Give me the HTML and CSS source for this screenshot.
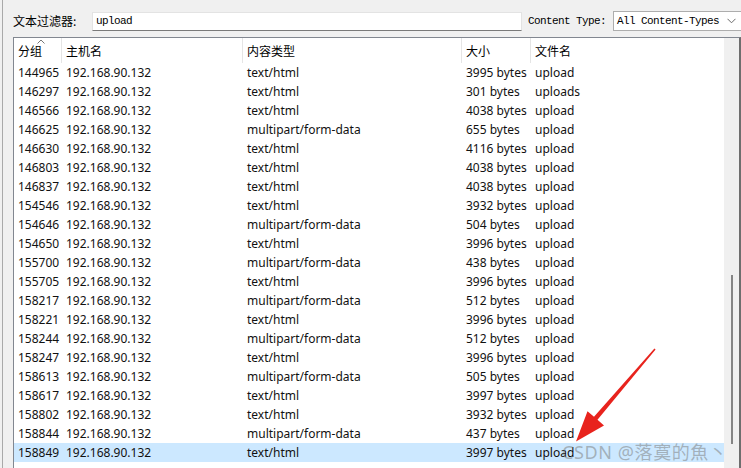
FILE: index.html
```html
<!DOCTYPE html>
<html lang="zh">
<head>
<meta charset="utf-8">
<title>Filter</title>
<link rel="stylesheet" href="styles.css">
</head>
<body>
<div class="screen">
  <div class="toolbar">
    <span class="label">文本过滤器:</span>
    <div class="input">upload</div>
    <span class="ct-label">Content Type:</span>
    <div class="select"><span>All Content-Types</span>
      <svg class="chev" width="9" height="6" viewBox="0 0 9 6"><path d="M0.5 0.8 L4.5 4.8 L8.5 0.8" fill="none" stroke="#6a6a6a" stroke-width="1"/></svg>
    </div>
  </div>
  <div class="panel">
    <div class="list">
      <div class="row head">
        <div class="hc first">分组<svg class="caret" width="8" height="5" viewBox="0 0 8 5"><path d="M0.5 4.5 L4 1 L7.5 4.5" fill="none" stroke="#777" stroke-width="1"/></svg></div>
        <div class="hc">主机名</div>
        <div class="hc">内容类型</div>
        <div class="hc">大小</div>
        <div class="hc">文件名</div>
      </div>
      <div class="rows" id="rows"></div>
    </div>
    <div class="vscroll"><div class="thumb"></div></div>
  </div>
</div>
<svg class="arrow" width="741" height="468" viewBox="0 0 741 468">
  <polygon points="655.6,349.4 597.5,419.8 604,425.5 576,441.5 587.5,411.2 594,416.8 654.4,348.6" fill="#e8231d"/>
</svg>
<div class="watermark">CSDN @落寞的魚丶</div>
<script>
var data = [
["144965","text/html","3995 bytes","upload"],
["146297","text/html","301 bytes","uploads"],
["146566","text/html","4038 bytes","upload"],
["146625","multipart/form-data","655 bytes","upload"],
["146630","text/html","4116 bytes","upload"],
["146803","text/html","4038 bytes","upload"],
["146837","text/html","4038 bytes","upload"],
["154546","text/html","3932 bytes","upload"],
["154646","multipart/form-data","504 bytes","upload"],
["154650","text/html","3996 bytes","upload"],
["155700","multipart/form-data","438 bytes","upload"],
["155705","text/html","3996 bytes","upload"],
["158217","multipart/form-data","512 bytes","upload"],
["158221","text/html","3996 bytes","upload"],
["158244","multipart/form-data","512 bytes","upload"],
["158247","text/html","3996 bytes","upload"],
["158613","multipart/form-data","505 bytes","upload"],
["158617","text/html","3997 bytes","upload"],
["158802","text/html","3932 bytes","upload"],
["158844","multipart/form-data","437 bytes","upload"],
["158849","text/html","3997 bytes","upload"]
];
var host = document.getElementById('rows');
data.forEach(function(d, i){
  var r = document.createElement('div');
  r.className = 'row data' + (i === data.length - 1 ? ' sel' : '');
  [d[0], '192.168.90.132', d[1], d[2], d[3]].forEach(function(t){
    var c = document.createElement('div');
    c.className = 'c';
    c.textContent = t;
    r.appendChild(c);
  });
  host.appendChild(r);
});
</script>
</body>
</html>
```
FILE: styles.css
```css
html, body {
  margin: 0;
  height: 100%;
  overflow: hidden;
  background: #f0f0f0;
}
body {
  position: relative;
  font-family: "Noto Sans", "Noto Sans CJK SC", sans-serif;
  color: #111;
}
.screen {
  margin-left: 2px;
  border-left: 1px solid #a9a9a9;
  padding-left: 10px;
  height: 100%;
  box-sizing: border-box;
}
.toolbar {
  display: flex;
  align-items: center;
  padding-top: 11px;
  height: 20px;
}
.label {
  width: 79px;
  font-family: "Noto Sans CJK SC", sans-serif;
  font-size: 12px;
  line-height: 20px;
  color: #000;
}
.input {
  width: 430px;
  height: 19px;
  box-sizing: border-box;
  background: #fff;
  border: 1px solid #e3e3e3;
  border-bottom: 1px solid #7a7a7a;
  font-family: "Liberation Mono", monospace;
  font-size: 11px;
  letter-spacing: -0.6px;
  line-height: 17px;
  padding-left: 3px;
  color: #000;
}
.ct-label {
  margin-left: 6px;
  width: 85px;
  font-family: "Liberation Mono", monospace;
  font-size: 11px;
  letter-spacing: -0.6px;
  color: #000;
}
.select {
  flex: 1;
  height: 20px;
  box-sizing: border-box;
  background: #fff;
  border: 1px solid #adadad;
  border-right: none;
  display: flex;
  align-items: center;
  padding-left: 3px;
  font-family: "Liberation Mono", monospace;
  font-size: 11px;
  letter-spacing: -0.6px;
  color: #000;
}
.chev {
  margin-left: 8px;
}
.panel {
  margin-top: 6px;
  height: 431px;
  box-sizing: border-box;
  border: 1px solid #828790;
  border-bottom: none;
  border-right: 2px solid #6e6e6e;
  background: #fff;
  display: flex;
}
.list {
  width: 710px;
}
.row {
  display: grid;
  grid-template-columns: 47px 181px 219px 69px 194px;
}
.head {
  height: 25px;
}
.hc {
  position: relative;
  border-left: 1px solid #e5e5e5;
  padding-left: 4px;
  font-family: "Noto Sans CJK SC", sans-serif;
  font-size: 12px;
  line-height: 25px;
  color: #000;
}
.hc.first {
  border-left: none;
}
.caret {
  position: absolute;
  left: 23px;
  top: 1px;
}
.data {
  height: 19px;
}
.data .c {
  padding-left: 4px;
  font-size: 12px;
  line-height: 19px;
  white-space: nowrap;
  color: #111;
}
.data .c:nth-child(n+2) {
  padding-left: 5px;
}
.sel {
  background: #cce8ff;
}
.vscroll {
  width: 16px;
  background: #f0f0f0;
}
.thumb {
  margin-top: 237px;
  margin-left: 7px;
  width: 2px;
  height: 169px;
  background: #858585;
}
.arrow {
  position: absolute;
  left: 0;
  top: 0;
  pointer-events: none;
}
.watermark {
  position: absolute;
  left: 562px;
  top: 441px;
  font-family: "Noto Sans", "Noto Sans CJK SC", sans-serif;
  font-size: 18px;
  letter-spacing: 0.6px;
  line-height: 22px;
  color: rgba(120, 120, 120, 0.5);
  white-space: nowrap;
}
```
